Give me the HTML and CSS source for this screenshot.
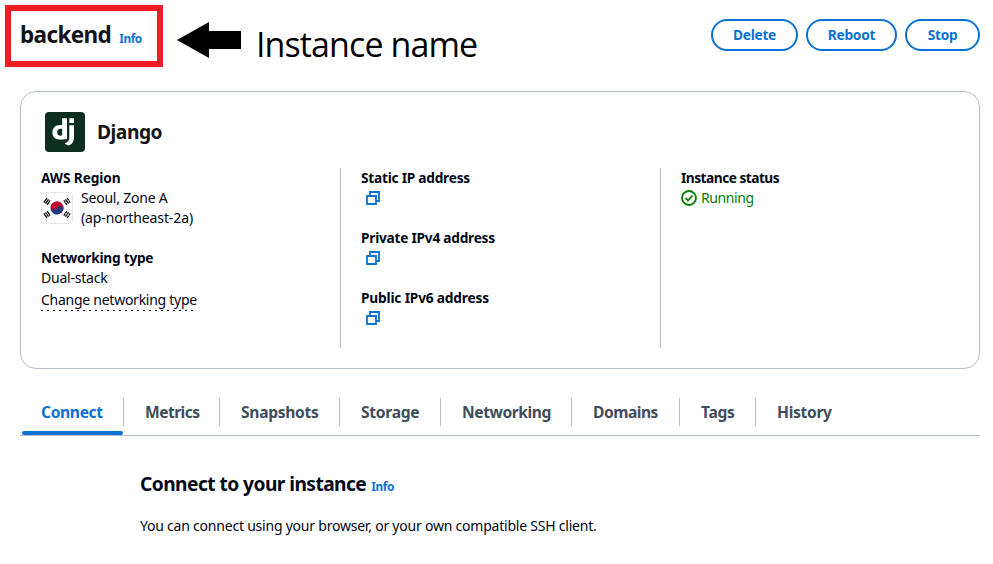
FILE: index.html
```html
<!DOCTYPE html>
<html lang="en">
<head>
<meta charset="utf-8">
<title>backend</title>
<link rel="stylesheet" href="styles.css">
</head>
<body>
<svg width="0" height="0" class="defs">
  <symbol id="copy" viewBox="0 0 16 16">
    <path d="M2 6h9v8H2z M5 6V2h9v9h-3" fill="none" stroke="#0972d3" stroke-width="1.800"/>
  </symbol>
</svg>
<header class="top">
  <div class="name-box"><h1>backend</h1><a class="info">Info</a></div>
  <svg class="arrow" width="64" height="36" viewBox="0 0 64 36"><path d="M0 18 32 0V9H64V27H32V36Z"/></svg>
  <span class="note">Instance name</span>
  <div class="actions">
    <button class="delete">Delete</button>
    <button class="reboot">Reboot</button>
    <button class="stop">Stop</button>
  </div>
</header>
<section class="card">
  <div class="card-head">
    <svg width="40" height="40" viewBox="0 0 40 40">
      <rect width="40" height="40" rx="4" fill="#0c2e20"/>
      <g fill="#fff">
        <path fill-rule="evenodd" d="M17.200 6.300H22V26.900C19.500 27.400 17.700 27.600 15.700 27.600C10.200 27.600 7.400 25.100 7.400 20.400C7.400 15.900 10.400 12.900 15 12.900C15.800 12.900 16.400 13 17.200 13.200ZM17.200 17.100C16.600 16.900 16.200 16.800 15.600 16.800C13.400 16.800 12.200 18.100 12.200 20.300C12.200 22.500 13.400 23.700 15.600 23.700C16.100 23.700 16.500 23.700 17.200 23.600Z"/>
        <path d="M24.300 6.300h4.700v4.800h-4.700z M24.300 13.200H29V23.500C29 27.100 28.700 28.800 27.700 30.400C26.800 31.900 25.500 32.800 23.200 33.600L19.500 31.500C21.800 30.500 23 29.700 23.600 28.500C24.200 27.300 24.300 26 24.300 22.800Z"/>
      </g>
    </svg>
    <h2>Django</h2>
  </div>
  <div class="columns">
    <div class="col">
      <div class="field">
        <b class="aws">AWS Region</b>
        <div class="region">
          <svg width="32" height="32" viewBox="0 0 32 32">
            <rect x=".5" y=".5" width="31" height="31" rx="3.500" fill="#fff" stroke="#e6e8ea"/>
            <g transform="translate(16 16)">
              <g transform="rotate(25)">
                <circle r="6.500" fill="#213a80"/>
                <path d="M-6.500 0A6.500 6.500 0 0 1 6.500 0Z" fill="#c4002f"/>
                <circle cx="-3.250" r="3.250" fill="#c4002f"/>
                <circle cx="3.250" r="3.250" fill="#213a80"/>
              </g>
              <g stroke="#111" stroke-width="1.400">
                <g transform="translate(-10 -6.500) rotate(-55)"><path d="M-2.700-2H2.700M-2.700 0H2.700M-2.700 2H2.700"/></g>
                <g transform="translate(10 6.500) rotate(-55)"><path d="M-2.700-2H2.700M-2.700 0H2.700M-2.700 2H2.700"/><path d="M0-3V3" stroke="#fff" stroke-width=".5"/></g>
                <g transform="translate(10 -6.500) rotate(55)"><path d="M-2.700-2H2.700M-2.700 0H2.700M-2.700 2H2.700"/><path d="M0-3V-1M0 1V3" stroke="#fff" stroke-width=".5"/></g>
                <g transform="translate(-10 6.500) rotate(55)"><path d="M-2.700-2H2.700M-2.700 0H2.700M-2.700 2H2.700"/><path d="M0-1V1" stroke="#fff" stroke-width=".5"/></g>
              </g>
            </g>
          </svg>
          <div><div>Seoul, Zone A</div><div class="zone">(ap-northeast-2a)</div></div>
        </div>
      </div>
      <div class="field">
        <b>Networking type</b>
        <div>Dual-stack</div>
        <a class="change">Change networking type</a>
      </div>
    </div>
    <div class="col">
      <div class="field"><b>Static IP address</b><svg class="copy"><use href="#copy"/></svg></div>
      <div class="field"><b>Private IPv4 address</b><svg class="copy"><use href="#copy"/></svg></div>
      <div class="field"><b class="ipv6">Public IPv6 address</b><svg class="copy"><use href="#copy"/></svg></div>
    </div>
    <div class="col">
      <div class="field">
        <b class="status">Instance status</b>
        <div class="running">
          <svg width="16" height="16" viewBox="0 0 16 16" fill="none" stroke="#008000" stroke-width="1.800"><circle cx="8" cy="8" r="7"/><path d="m4.500 8 2.500 2.500L11.500 5.500"/></svg>
          <span>Running</span>
        </div>
      </div>
    </div>
  </div>
</section>
<nav class="tabs">
  <a class="tab connect"><span>Connect</span></a>
  <a class="tab metrics"><span>Metrics</span></a>
  <a class="tab snapshots"><span>Snapshots</span></a>
  <a class="tab storage"><span>Storage</span></a>
  <a class="tab networking"><span>Networking</span></a>
  <a class="tab domains"><span>Domains</span></a>
  <a class="tab tags"><span>Tags</span></a>
  <a class="tab history"><span>History</span></a>
</nav>
<main>
  <div class="heading"><h3>Connect to your instance</h3><a class="info">Info</a></div>
  <p>You can connect using your browser, or your own compatible SSH client.</p>
</main>
</body>
</html>
```
FILE: styles.css
```css
* { box-sizing: border-box; }
body {
  margin: 0;
  background: #fff;
  color: #000716;
  font: 14px/20px "Noto Sans", sans-serif;
  letter-spacing: -.22px;
}
h1, h2, h3, p { margin: 0; font-weight: 700; }
b { display: block; font-size: 13.7px; font-weight: 700; letter-spacing: -.24px; }
svg { display: block; flex: none; }
.defs { display: none; }
.top { display: flex; align-items: flex-start; height: 91px; padding: 5px 13px 0 5px; }
.name-box { display: flex; align-items: baseline; gap: 8px; width: 158px; height: 62px; padding: 1px 0 0 9px; border: 6px solid #ed1c24; }
h1 { font-size: 22.5px; line-height: 46px; letter-spacing: -.62px; color: #0f141a; }
.info { font-size: 11.8px; font-weight: 700; letter-spacing: -.4px; color: #0972d3; }
.arrow { margin: 17px 0 0 14px; }
.note { margin: 16px 0 0 15px; font: 34px/46px "Open Sans", sans-serif; letter-spacing: -.9px; color: #000; white-space: nowrap; }
.actions { display: flex; gap: 8px; margin: 14px 0 0 auto; }
button { height: 32px; padding: 0; border: 2px solid #0972d3; border-radius: 16px; background: #fff; color: #0972d3; font: 700 13.7px/28px "Noto Sans", sans-serif; letter-spacing: -.26px; }
.delete { width: 87px; }
.reboot { width: 91px; }
.stop { width: 75px; }
.card { width: 960px; height: 278px; margin-left: 20px; padding: 20px 0 0; border: 1px solid #b6bec9; border-radius: 16px; }
.card-head { display: flex; align-items: center; gap: 12px; height: 40px; padding-left: 24px; }
h2 { font-size: 19.2px; letter-spacing: -.45px; color: #0f141a; }
.columns { display: grid; grid-template-columns: 320px 320px 1fr; height: 180px; margin-top: 16px; }
.col { display: flex; flex-direction: column; gap: 20px; padding-left: 20px; }
.col + .col { margin-left: -1px; border-left: 1px solid #b6bec9; }
.aws { letter-spacing: -.12px; }
.ipv6 { letter-spacing: -.17px; }
.status { letter-spacing: -.5px; }
.region { display: flex; align-items: center; gap: 8px; }
.zone { letter-spacing: -.11px; }
.change { display: block; width: 156px; height: 21px; margin-top: 2px; background: repeating-linear-gradient(90deg, #000716 0 2px, transparent 2px 6px) 0 100% / 100% 1px no-repeat; letter-spacing: -.26px; white-space: nowrap; }
.copy { width: 16px; height: 16px; margin: 2px 0 2px 4px; }
.running { display: flex; align-items: center; gap: 4px; color: #008000; letter-spacing: -.4px; }
.tabs { display: flex; width: 960px; height: 47px; margin: 20px 0 0 20px; border-bottom: 1px solid #b6bec9; font-size: 15.6px; font-weight: 700; color: #414d5c; }
.tab { display: flex; height: 28px; margin-top: 9px; padding-left: 21px; border-right: 1px solid #b6bec9; line-height: 28px; }
.connect { position: relative; width: 104px; color: #0972d3; letter-spacing: -.35px; }
.connect::after { content: ""; position: absolute; left: 2px; bottom: -9px; width: 101px; height: 4px; border-radius: 2px; background: #0972d3; }
.metrics { width: 96px; letter-spacing: -.55px; }
.snapshots { width: 120px; letter-spacing: -.3px; }
.storage { width: 101px; letter-spacing: -.28px; }
.networking { width: 131px; letter-spacing: -.42px; }
.domains { width: 108px; letter-spacing: -.48px; }
.tags { width: 76px; letter-spacing: -.3px; }
.history { border: 0; letter-spacing: -.3px; }
main { padding: 36px 0 0 140px; }
.heading { display: flex; align-items: baseline; gap: 5px; }
h3 { font-size: 19.2px; line-height: 24px; letter-spacing: -.56px; color: #000716; }
p { margin-top: 20px; font-weight: 400; }
```
